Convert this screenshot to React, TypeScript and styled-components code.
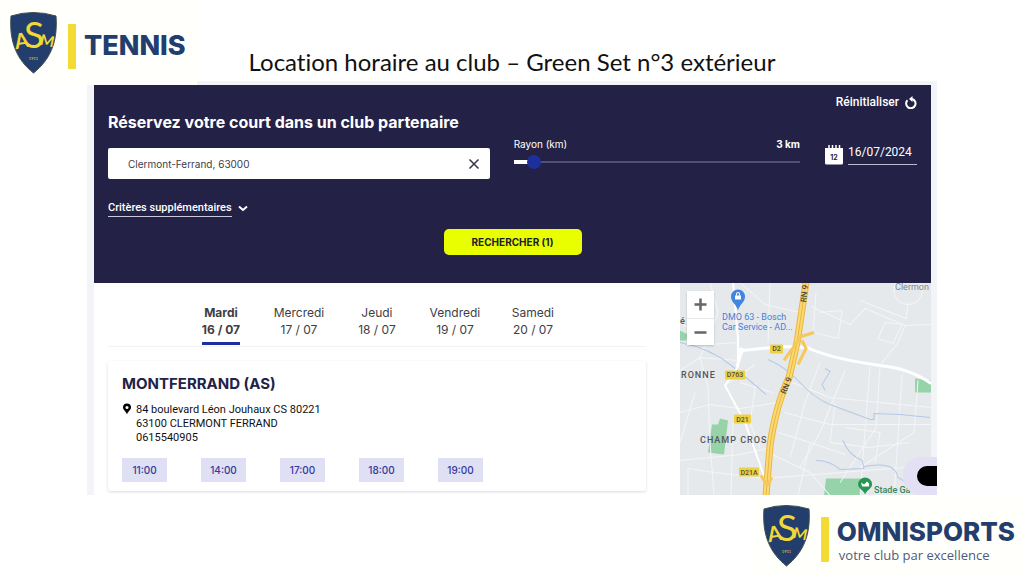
import React, { useState } from "react";
import styled, { createGlobalStyle } from "styled-components";

const navy = "#232246";
const brandBlue = "#233e6c";
const royal = "#1d2f9b";
const geometric = `Inter, "Liberation Sans", sans-serif`;
const body = `Roboto, "Liberation Sans", sans-serif`;

const GlobalStyle = createGlobalStyle`
  * { box-sizing: border-box; }
  body { margin: 0; background: #fff; color: #111; font-family: ${body}; }
  button, input { font: inherit; color: inherit; }
  button { border: 0; padding: 0; background: none; cursor: pointer; }
  h1, h2, p { margin: 0; }
`;

const Page = styled.div`
  display: flex;
  flex-direction: column;
  min-height: 100vh;
  overflow: hidden;
`;

const Header = styled.header`
  display: grid;
  grid-template-columns: 1fr auto 1fr;
  align-items: start;
  height: 81px;
`;

const Brand = styled.div`
  position: relative;
  z-index: 1;
  display: flex;
  align-items: center;
  width: 197px;
  height: 85px;
  padding: 0 10px;
  background: #fffffb;
`;

const Shield = styled.svg`
  flex: none;
  width: 47px;
  height: 62px;
`;

const BrandBar = styled.span`
  flex: none;
  width: 8px;
  height: 45px;
  margin: 8px 8px 0 11px;
  border-radius: 1px;
  background: #f3da35;
`;

const BrandName = styled.div<{ $size: number }>`
  margin-top: 7px;
  font-family: ${geometric};
  font-size: ${(p) => p.$size}px;
  font-weight: 800;
  line-height: 32px;
  color: ${brandBlue};
`;

const BrandTagline = styled.div`
  font-family: "Open Sans", sans-serif;
  font-size: 13px;
  line-height: 15px;
  color: #4a5c83;
  padding-left: 2px;
`;

const Title = styled.h1`
  padding-top: 46px;
  font-family: Lato, "Liberation Sans", sans-serif;
  font-size: 24px;
  font-weight: 400;
  font-variant-ligatures: none;
  line-height: 32px;
  white-space: nowrap;
`;

const Booking = styled.main`
  margin: 0 87px;
  padding: 4px 6px 0 7px;
  background: #f3f4f7;
  overflow: hidden;
`;

const Search = styled.form`
  display: flex;
  flex-direction: column;
  height: 198px;
  padding: 8px 14px 28px;
  background: ${navy};
  color: #fff;
`;

const ResetButton = styled.button`
  display: flex;
  align-items: center;
  align-self: flex-end;
  gap: 6px;
  font-size: 12px;
  font-weight: 500;
  line-height: 18px;
`;

const SearchTitle = styled.h2`
  font-family: ${geometric};
  font-size: 16px;
  font-weight: 700;
  line-height: 22px;
`;

const Fields = styled.div`
  display: grid;
  grid-template-columns: 4fr 3fr 93px;
  gap: 24px;
  padding-top: 4px;
`;

const PlaceBox = styled.div`
  display: flex;
  align-items: center;
  height: 31px;
  margin-top: 11px;
  padding: 0 10px 0 20px;
  border-radius: 2px;
  background: #fff;
  color: #3c3d4d;
`;

const PlaceInput = styled.input`
  flex: 1;
  min-width: 0;
  border: 0;
  padding: 0;
  background: transparent;
  font-family: ${geometric};
  font-size: 10px;
`;

const ClearButton = styled.button`
  display: flex;
`;

const Radius = styled.div`
  display: flex;
  flex-direction: column;
  gap: 4px;
`;

const RadiusHead = styled.div`
  display: flex;
  justify-content: space-between;
  font-family: ${geometric};
  font-size: 10px;
  line-height: 14px;

  output { font-weight: 700; }
`;

const RadiusRange = styled.input`
  appearance: none;
  width: 100%;
  height: 14px;
  margin: 0;
  background:
    linear-gradient(#fff, #fff) left center / 20px 4px no-repeat,
    linear-gradient(#50506f, #50506f) center / 100% 2px no-repeat;

  &::-webkit-slider-thumb {
    appearance: none;
    width: 14px;
    height: 14px;
    border-radius: 50%;
    background: ${royal};
  }
`;

const DateField = styled.label`
  display: flex;
  align-items: flex-end;
  gap: 4px;
  height: 28px;
`;

const DateInput = styled.input`
  flex: 1;
  min-width: 0;
  height: 25px;
  border: 0;
  border-bottom: 1px solid #b9b9d0;
  padding: 0;
  background: transparent;
  font-size: 12px;
`;

const MoreButton = styled.button`
  display: flex;
  align-items: center;
  align-self: flex-start;
  gap: 6px;
  margin-top: 21px;
  font-size: 11px;
  font-weight: 500;
  line-height: 16px;

  span { border-bottom: 1px solid #c9c9da; }
`;

const SubmitButton = styled.button`
  align-self: center;
  flex: none;
  width: 138px;
  height: 26px;
  margin-top: 12px;
  border-radius: 5px;
  background: #e9ff00;
  color: #1b1b2c;
  font-family: ${geometric};
  font-size: 10px;
  font-weight: 700;
`;

const Results = styled.div`
  display: grid;
  grid-template-columns: 7fr 3fr;
  min-height: 212px;
  background: #fff;
`;

const Listing = styled.section`
  padding: 21px 34px 4px 14px;
`;

const Days = styled.nav`
  display: flex;
  justify-content: center;
  border-bottom: 1px solid #f3f3f6;
`;

const Day = styled.button<{ $active?: boolean }>`
  width: 78px;
  height: 42px;
  display: flex;
  flex-direction: column;
  align-items: center;
  font-family: ${geometric};
  font-size: 12px;
  font-weight: ${(p) => (p.$active ? 700 : 400)};
  line-height: 17px;
  color: #3d3d44;

  &::after {
    content: "";
    width: 38px;
    height: 3px;
    margin-top: 4px;
    background: ${(p) => (p.$active ? royal : "transparent")};
  }
`;

const ClubCard = styled.article`
  margin-top: 14px;
  padding: 13px 14px 9px;
  border-radius: 3px;
  background: #fff;
  box-shadow: 0 1px 3px rgba(30, 30, 60, 0.16);
`;

const ClubName = styled.h2`
  font-family: ${geometric};
  font-size: 15px;
  font-weight: 700;
  line-height: 20px;
  color: ${navy};
`;

const Address = styled.address`
  display: flex;
  gap: 4px;
  margin-top: 9px;
  font-size: 11px;
  font-style: normal;
  line-height: 14px;

  svg { flex: none; }
`;

const Slots = styled.div`
  display: flex;
  gap: 34px;
  margin-top: 13px;
`;

const Slot = styled.button`
  width: 45px;
  height: 24px;
  background: #dfe0f4;
  color: #34399b;
  font-family: ${geometric};
  font-size: 10px;
  font-weight: 500;
`;

const MapPane = styled.section`
  position: relative;
  background: #e6e9ec;
`;

const MapDrawing = styled.svg`
  position: absolute;
  inset: 0;
  width: 100%;
  height: 100%;
`;

const ZoomControl = styled.div`
  position: absolute;
  left: 7px;
  top: 8px;
  width: 27px;
  display: flex;
  flex-direction: column;
  background: #fff;
  box-shadow: 0 1px 2px rgba(0, 0, 0, 0.2);

  button { display: flex; align-items: center; justify-content: center; height: 27px; }
  button + button { border-top: 1px solid #e6e6e6; }
`;

const ChatButton = styled.button`
  position: absolute;
  right: -18px;
  bottom: 0;
  display: flex;
  align-items: center;
  justify-content: flex-end;
  width: 46px;
  height: 38px;
  border-radius: 18px 0 0 18px;
  background: #e3e0f6;

  &::before {
    content: "";
    width: 32px;
    height: 20px;
    border-radius: 10px;
    background: #000;
  }
`;

const Footer = styled.footer`
  display: flex;
  justify-content: flex-end;
`;

const FooterBrand = styled.div`
  display: flex;
  align-items: center;
  height: 81px;
  padding: 0 9px;
  background: #fffffb;
`;

function Crest() {
  return (
    <Shield viewBox="0 0 47 62" role="img" aria-label="ASM">
      <path
        d="M1 4 Q23 -3 46 4 C48 30 40 48 23.500 61 C7 48 -1 30 1 4Z"
        fill={brandBlue}
        stroke="#3d4a4a"
        strokeWidth="1"
      />
      <g fill="#f0d836" fontFamily="Lato, sans-serif" textAnchor="middle">
        <text x="12" y="36" fontSize="21" fontWeight="700" transform="rotate(-10 12 30)">A</text>
        <text x="24" y="36" fontSize="37">S</text>
        <text x="37" y="34" fontSize="15" fontWeight="700" transform="rotate(12 37 30)">M</text>
        <text x="23.500" y="48" fontSize="4">1911</text>
      </g>
    </Shield>
  );
}

const blocks = [
  "M0 40 L30 62 L57 60", "M0 88 L20 75 L57 78", "M30 0 L38 30 L20 75 L28 105 L30 160 L34 213",
  "M60 0 L85 22 L120 30", "M90 0 L88 60", "M0 130 L30 122 L60 126 L98 120", "M0 178 L30 175 L60 172 L90 165",
  "M8 213 L8 186 L34 190 L84 196 L251 183", "M53 140 L51 213", "M15 110 L0 160", "M76 100 L70 140 L80 165",
  "M131 24 L170 42 L185 26 L225 43 L251 42", "M136 10 L133 50 L158 56 L162 28 L140 30",
  "M205 40 L198 56 L213 61 L222 42 L205 40", "M225 43 L218 60 L200 83", "M180 18 L226 36 L228 20",
  "M112 100 L150 115 L251 125", "M104 130 L150 142 L251 142", "M140 80 L125 120 L110 175",
  "M165 88 L140 150 L120 185", "M190 84 L180 213", "M200 84 L196 145 L160 200", "M222 92 L214 213",
  "M238 98 L234 150 L180 185", "M98 150 L130 160 L165 172", "M130 160 L118 213", "M155 120 L150 160 L190 165 L230 160",
  "M165 145 L200 150 L195 180", "M92 172 L130 190 L150 213", "M60 100 L92 110", "M45 103 L75 82",
];

const waters = [
  "M0 60 Q30 66 50 82 T86 112", "M88 77 Q104 84 116 96 Q134 116 150 122 T190 137 L194 137 L194 131 L220 132 L250 135",
  "M163 158 Q168 172 182 178 L184 186 L160 187 Q150 178 136 178", "M184 184 Q215 178 218 195 L228 201",
  "M145 86 L150 89 L142 102 L145 108",
];

const greens = [
  "M32 142 L38 142 L40 136 L48 138 L44 172 L28 170Z", "M235 96 L251 98 L251 110 L235 110Z",
  "M146 196 L182 196 L180 213 L144 213Z", "M0 48 L8 52 L6 58 L0 58Z",
];

const roadTags: [string, number, number, number][] = [
  ["D2", 90, 62, 13], ["D763", 45, 88, 20], ["D21", 54, 132, 17], ["D21A", 59, 185, 20],
];

function CityMap() {
  return (
    <MapDrawing viewBox="0 0 251 213" preserveAspectRatio="xMidYMid slice" role="img" aria-label="Carte" fontFamily="Roboto, sans-serif">
      <rect width="251" height="213" fill="#e6e9ec" />
      {greens.map((d) => <path key={d} d={d} fill="#96d3a8" />)}
      <g fill="none" stroke="#f3f5f7" strokeWidth="1">
        {blocks.map((d) => <path key={d} d={d} />)}
        <circle cx="228" cy="8" r="14" />
      </g>
      <g fill="none" stroke="#b4c8e6" strokeWidth="1">
        {waters.map((d) => <path key={d} d={d} />)}
      </g>
      <g fill="none" stroke="#fff" strokeLinejoin="round">
        <path strokeWidth="2" d="M53 0 L58 56 L58 84 L45 103 L65 140 L86 199" />
        <path strokeWidth="3" d="M57 84 L62 68 L103 64 L127 65 Q150 76 200 83 Q230 86 251 101" />
        <circle cx="61" cy="68" r="2" strokeWidth="2" />
      </g>
      <g fill="none" strokeLinejoin="round">
        <path stroke="#eab63f" strokeWidth="7" d="M126 0 L117 60 L109 95 Q96 122 90 163 L86 213" />
        <path stroke="#fbd973" strokeWidth="5" d="M126 0 L117 60 L109 95 Q96 122 90 163 L86 213" />
        <path stroke="#eab63f" strokeWidth="1" d="M126 0 L117 60 L109 95 Q96 122 90 163 L86 213" />
        <path stroke="#f5c859" strokeWidth="3" d="M134 50 L121 54 L104 78 M122 58 L126 66 L118 82 M81 193 L87 203 L92 195" />
      </g>
      {roadTags.map(([name, x, y, w]) => (
        <g key={name}>
          <rect x={x} y={y} width={w} height="9" rx="1" fill="#edd044" />
          <text x={x + w / 2} y={y + 7} textAnchor="middle" fontSize="7" fontWeight="500" fill="#555033">{name}</text>
        </g>
      ))}
      <g fill="#4c4a3e" fontSize="8" fontWeight="500" textAnchor="middle">
        <text x="124" y="14" transform="rotate(-83 124 11)">RN 9</text>
        <text x="106" y="106" transform="rotate(-68 106 103)">RN 9</text>
      </g>
      <g fill="#53565b" fontSize="9" fontWeight="500">
        <text x="1" y="96" letterSpacing="1">RONNE</text>
        <text x="20" y="160" letterSpacing="1">CHAMP CROS</text>
        <text x="0" y="42">é</text>
      </g>
      <text x="215" y="8" fontSize="9" fill="#7c8792">Clermon</text>
      <g fill="#4480d8" fontSize="9">
        <text x="42" y="38">DMO 63 - Bosch</text>
        <text x="42" y="48">Car Service - AD...</text>
      </g>
      <path d="M58 28 C56 21 51 20 51 14 A7 7 0 0 1 65 14 C65 20 60 21 58 28Z" fill="#4285e0" />
      <path d="M55 13h6v4h-6z" fill="#fff" />
      <path d="M56.500 13v-1.500a1.500 1.500 0 0 1 3 0V13" fill="none" stroke="#fff" />
      <path d="M185 212 C183 207 178 206 178 202 A7 7 0 0 1 192 202 C192 206 187 207 185 212Z" fill="#279653" />
      <path d="M181 200l3 2 3-3 2 2v3h-7z" fill="#fff" />
      <text x="194" y="210" fontSize="9" fontWeight="500" fill="#37855a">Stade Ga</text>
    </MapDrawing>
  );
}

const days = [
  ["Mardi", "16 / 07"],
  ["Mercredi", "17 / 07"],
  ["Jeudi", "18 / 07"],
  ["Vendredi", "19 / 07"],
  ["Samedi", "20 / 07"],
];

const slots = ["11:00", "14:00", "17:00", "18:00", "19:00"];

export default function App() {
  const [place, setPlace] = useState("Clermont-Ferrand, 63000");
  const [date, setDate] = useState("16/07/2024");
  const [radius, setRadius] = useState(3);
  const [day, setDay] = useState("Mardi");

  return (
    <Page>
      <GlobalStyle />
      <Header>
        <Brand>
          <Crest />
          <BrandBar />
          <BrandName $size={27}>TENNIS</BrandName>
        </Brand>
        <Title>Location horaire au club – Green Set n°3 extérieur</Title>
      </Header>

      <Booking>
        <Search onSubmit={(e) => e.preventDefault()}>
          <ResetButton type="reset">
            Réinitialiser
            <svg width="12" height="13" viewBox="0 0 12 13" fill="none" stroke="#fff" strokeWidth="2">
              <path d="M2.500 4.200 A4.700 4.700 0 1 0 7 3" />
              <path d="M7.500 0 L4 3 L7.500 6Z" fill="#fff" stroke="none" />
            </svg>
          </ResetButton>
          <SearchTitle>Réservez votre court dans un club partenaire</SearchTitle>
          <Fields>
            <PlaceBox>
              <PlaceInput aria-label="Lieu" value={place} onChange={(e) => setPlace(e.target.value)} />
              <ClearButton type="button" aria-label="Effacer" onClick={() => setPlace("")}>
                <svg width="12" height="12" viewBox="0 0 12 12" stroke="#34354a" strokeWidth="1.500">
                  <path d="M1.500 1.500 L10.500 10.500 M10.500 1.500 L1.500 10.500" />
                </svg>
              </ClearButton>
            </PlaceBox>
            <Radius>
              <RadiusHead>
                <label htmlFor="radius">Rayon (km)</label>
                <output htmlFor="radius">{radius} km</output>
              </RadiusHead>
              <RadiusRange
                id="radius"
                type="range"
                min={0}
                max={60}
                value={radius}
                onChange={(e) => setRadius(Number(e.target.value))}
              />
            </Radius>
            <DateField>
              <svg width="20" height="20" viewBox="0 0 20 20" role="img" aria-label="Date">
                <path d="M1 3h18v15a1.500 1.500 0 0 1-1.500 1.500h-15A1.500 1.500 0 0 1 1 18Z" fill="#fff" />
                <path d="M5 0v4M8.500 0v4M12 0v4M15.500 0v4" stroke="#fff" strokeWidth="1.500" />
                <text x="10" y="15" textAnchor="middle" fontSize="7" fontWeight="700" fontFamily="Inter, sans-serif" fill={navy}>12</text>
              </svg>
              <DateInput value={date} onChange={(e) => setDate(e.target.value)} />
            </DateField>
          </Fields>
          <MoreButton type="button">
            <span>Critères supplémentaires</span>
            <svg width="10" height="7" viewBox="0 0 10 7" fill="none" stroke="#fff" strokeWidth="2">
              <path d="M1 1.500 L5 5 L9 1.500" />
            </svg>
          </MoreButton>
          <SubmitButton type="submit">RECHERCHER (1)</SubmitButton>
        </Search>

        <Results>
          <Listing>
            <Days>
              {days.map(([name, label]) => (
                <Day key={name} $active={day === name} onClick={() => setDay(name)}>
                  <span>{name}</span>
                  <span>{label}</span>
                </Day>
              ))}
            </Days>
            <ClubCard>
              <ClubName>MONTFERRAND (AS)</ClubName>
              <Address>
                <svg width="10" height="12" viewBox="0 0 10 12">
                  <path d="M5 11.500C4.300 8.500 1 7 1 4.500a4 4 0 0 1 8 0C9 7 5.700 8.500 5 11.500Z" fill="#000" />
                  <circle cx="5" cy="4.500" r="1.500" fill="#fff" />
                </svg>
                <div>
                  <p>84 boulevard Léon Jouhaux CS 80221</p>
                  <p>63100 CLERMONT FERRAND</p>
                  <p>0615540905</p>
                </div>
              </Address>
              <Slots>
                {slots.map((slot) => <Slot key={slot}>{slot}</Slot>)}
              </Slots>
            </ClubCard>
          </Listing>
          <MapPane>
            <CityMap />
            <ZoomControl>
              <button aria-label="Zoom avant">
                <svg width="13" height="13" viewBox="0 0 13 13" stroke="#666" strokeWidth="2.500"><path d="M0.500 6.500h12M6.500 0.500v12" /></svg>
              </button>
              <button aria-label="Zoom arrière">
                <svg width="13" height="13" viewBox="0 0 13 13" stroke="#666" strokeWidth="2.500"><path d="M0.500 6.500h12" /></svg>
              </button>
            </ZoomControl>
            <ChatButton aria-label="Discussion" />
          </MapPane>
        </Results>
      </Booking>

      <Footer>
        <FooterBrand>
          <Crest />
          <BrandBar />
          <div>
            <BrandName $size={26}>OMNISPORTS</BrandName>
            <BrandTagline>votre club par excellence</BrandTagline>
          </div>
        </FooterBrand>
      </Footer>
    </Page>
  );
}
